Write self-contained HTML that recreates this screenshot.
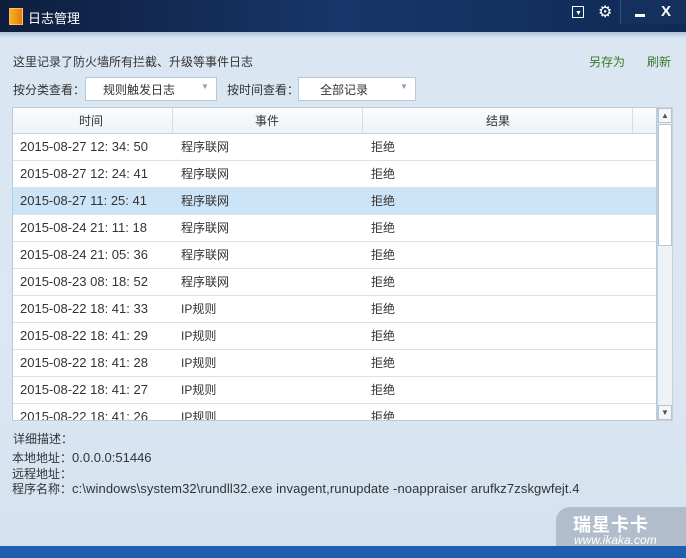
<!DOCTYPE html><html><head><meta charset="utf-8"><style>
body{margin:0;width:686px;height:558px;overflow:hidden;font-family:"Liberation Sans","Noto Sans CJK SC",sans-serif;font-size:12px;color:#333;position:relative;background:linear-gradient(#d9e6f2,#dbe7f3 60%,#d4e2ef)}
.t{position:absolute;white-space:nowrap}
.l{font-size:13px}
#title{position:absolute;left:0;top:0;width:686px;height:32px;background:linear-gradient(90deg,#0e1e3e,#18366a 50%,#102a55);color:#fff;font-size:13px}
#title2{position:absolute;top:32px;left:0;width:686px;height:6px;background:linear-gradient(#b0c2d6,#d9e6f2)}
.sel{position:absolute;background:#fff;border:1px solid #b7c8d8;height:22px;top:77px}
.tbl{position:absolute;left:12px;top:107px;width:645px;height:314px;background:#fff;overflow:hidden;border:1px solid #b9cad9;box-sizing:border-box}
.row{position:absolute;left:0;width:645px;height:27px;border-bottom:1px solid #d8e2eb;box-sizing:border-box;line-height:26px}
.row span{position:absolute}
.row span:first-child{font-size:13px}
</style></head><body>
<div id="title"><div class="t" style="left:9px;top:8px;width:12px;height:15px;background:linear-gradient(90deg,#f7b21d,#e67b10);border:1px solid #fff6"></div><div class="t" style="left:28px;top:8px">日志管理</div>
<div class="t" style="left:572px;top:6px;width:10px;height:10px;border:1px solid #fff"></div><div class="t" style="left:575px;top:10px;font-size:7px;color:#fff">▼</div>
<div class="t" style="left:598px;top:2px;font-size:16px">⚙</div>
<div class="t" style="left:620px;top:0;width:66px;height:24px;border-left:1px solid #33507a;background:#14305c"></div>
<div class="t" style="left:635px;top:14px;width:10px;height:3px;background:#fff"></div>
<div class="t" style="left:661px;top:3px;font-size:15px;font-weight:bold">X</div></div>
<div id="title2"></div>
<div class="t" style="left:13px;top:53px">这里记录了防火墙所有拦截、升级等事件日志</div>
<div class="t" style="left:589px;top:53px;color:#3a7a2e">另存为</div>
<div class="t" style="left:647px;top:53px;color:#3a7a2e">刷新</div>
<div class="t" style="left:13px;top:81px">按分类查看：</div>
<div class="sel" style="left:85px;width:130px"><span class="t" style="left:17px;top:3px">规则触发日志</span><span class="t" style="left:115px;top:4px;font-size:8px;color:#99a">▼</span></div>
<div class="t" style="left:227px;top:81px">按时间查看：</div>
<div class="sel" style="left:298px;width:116px"><span class="t" style="left:21px;top:3px">全部记录</span><span class="t" style="left:101px;top:4px;font-size:8px;color:#99a">▼</span></div>
<div class="tbl">
<div class="row" style="top:0;height:26px;background:linear-gradient(#fafcfd,#eef3f7);border-bottom:1px solid #c8d5e0"><span style="left:66px;font-size:12px">时间</span><span style="left:242px">事件</span><span style="left:473px">结果</span>
<span style="left:159px;top:0;height:26px;border-left:1px solid #d4dde6"></span><span style="left:349px;top:0;height:26px;border-left:1px solid #d4dde6"></span><span style="left:619px;top:0;height:26px;border-left:1px solid #d4dde6"></span></div>
<div class="row" style="top:26px"><span style="left:7px">2015-08-27 12: 34: 50</span><span style="left:168px">程序联网</span><span style="left:358px">拒绝</span></div>
<div class="row" style="top:53px"><span style="left:7px">2015-08-27 12: 24: 41</span><span style="left:168px">程序联网</span><span style="left:358px">拒绝</span></div>
<div class="row" style="top:80px;background:#cce4f7"><span style="left:7px">2015-08-27 11: 25: 41</span><span style="left:168px">程序联网</span><span style="left:358px">拒绝</span></div>
<div class="row" style="top:107px"><span style="left:7px">2015-08-24 21: 11: 18</span><span style="left:168px">程序联网</span><span style="left:358px">拒绝</span></div>
<div class="row" style="top:134px"><span style="left:7px">2015-08-24 21: 05: 36</span><span style="left:168px">程序联网</span><span style="left:358px">拒绝</span></div>
<div class="row" style="top:161px"><span style="left:7px">2015-08-23 08: 18: 52</span><span style="left:168px">程序联网</span><span style="left:358px">拒绝</span></div>
<div class="row" style="top:188px"><span style="left:7px">2015-08-22 18: 41: 33</span><span style="left:168px">IP规则</span><span style="left:358px">拒绝</span></div>
<div class="row" style="top:215px"><span style="left:7px">2015-08-22 18: 41: 29</span><span style="left:168px">IP规则</span><span style="left:358px">拒绝</span></div>
<div class="row" style="top:242px"><span style="left:7px">2015-08-22 18: 41: 28</span><span style="left:168px">IP规则</span><span style="left:358px">拒绝</span></div>
<div class="row" style="top:269px"><span style="left:7px">2015-08-22 18: 41: 27</span><span style="left:168px">IP规则</span><span style="left:358px">拒绝</span></div>
<div class="row" style="top:296px"><span style="left:7px">2015-08-22 18: 41: 26</span><span style="left:168px">IP规则</span><span style="left:358px">拒绝</span></div>
</div>
<div class="t" style="left:657px;top:107px;width:16px;height:314px;background:#eef2f6;border:1px solid #c4d0dc;box-sizing:border-box"></div>
<div class="t" style="left:658px;top:108px;width:14px;height:15px;background:#f4f6f8;border:1px solid #b8c4d0;box-sizing:border-box;font-size:8px;text-align:center;line-height:13px;color:#555">▲</div>
<div class="t" style="left:658px;top:124px;width:14px;height:122px;background:#fff;border:1px solid #b8c4d0;box-sizing:border-box"></div>
<div class="t" style="left:658px;top:405px;width:14px;height:15px;background:#f4f6f8;border:1px solid #b8c4d0;box-sizing:border-box;font-size:8px;text-align:center;line-height:13px;color:#555">▼</div>
<div class="t" style="left:13px;top:430px">详细描述：</div>
<div class="t" style="left:12px;top:449px">本地地址：<span class="l">0.0.0.0:51446</span></div>
<div class="t" style="left:12px;top:465px">远程地址：</div>
<div class="t" style="left:12px;top:480px">程序名称：<span class="l" style="letter-spacing:0.1px">c:\windows\system32\rundll32.exe invagent,runupdate -noappraiser arufkz7zskgwfejt.4</span></div>
<div class="t" style="left:556px;top:507px;width:130px;height:44px;background:#aab6c3;border-radius:14px 0 0 0;opacity:.85"></div>
<div class="t" style="left:573px;top:511px;color:#fff;font-size:18px;font-weight:bold;letter-spacing:1px">瑞星卡卡</div>
<div class="t" style="left:574px;top:533px;color:#fff;font-size:12px;font-style:italic">www.ikaka.com</div>
<div class="t" style="left:0;top:546px;width:686px;height:12px;background:#1d5fae"></div>
</body></html>
